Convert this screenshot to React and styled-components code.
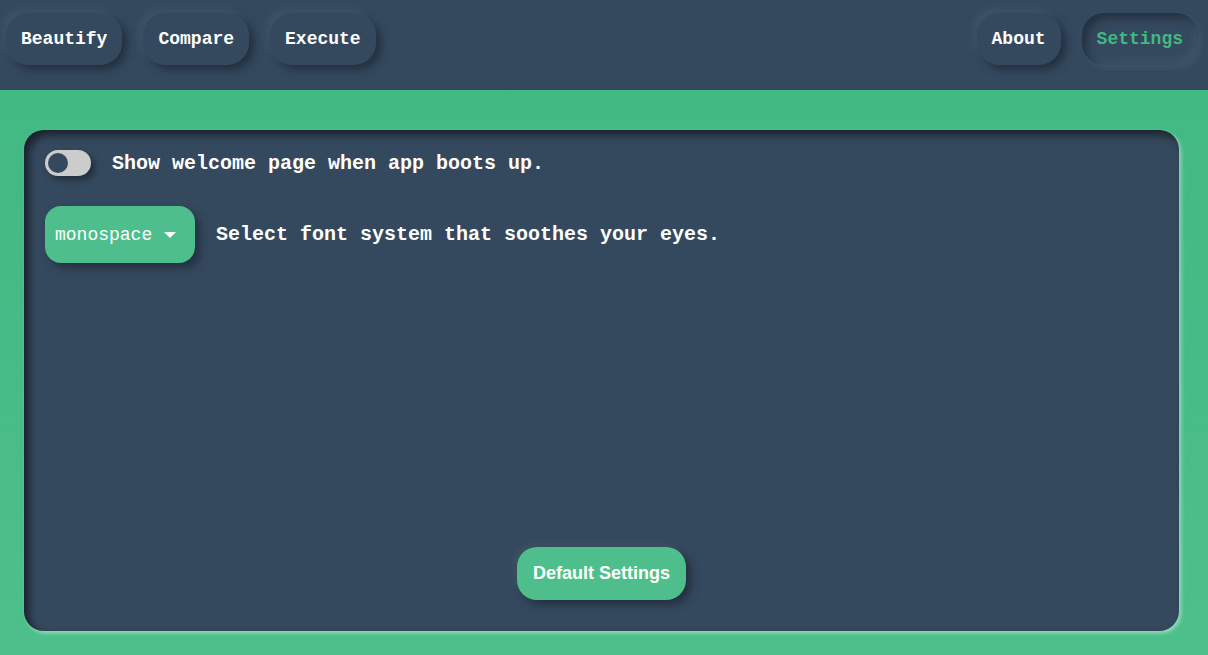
import { useState } from 'react';
import styled, { createGlobalStyle, css } from 'styled-components';

const GlobalStyle = createGlobalStyle`
    html, body {
        margin: 0;
        padding: 0;
        height: 100%;
        background: #35495e;
    }
    #root {
        height: 100%;
    }
`;

const navy = '#35495e';
const green = '#42b883';
const mono = `"Courier New", "Liberation Mono", monospace`;

const Page = styled.div`
    height: 655px;
    display: flex;
    flex-direction: column;
    font-family: ${mono};
`;

const Header = styled.header`
    height: 90px;
    flex-shrink: 0;
    background: ${navy};
    display: flex;
    align-items: flex-start;
    justify-content: space-between;
    padding: 13px 10px 0 6px;
    box-sizing: border-box;
`;

const NavGroup = styled.nav`
    display: flex;
    gap: 21px;
`;

const raised = css`
    box-shadow: 5px 5px 9px rgba(20, 30, 40, 0.55), -4px -4px 8px rgba(255, 255, 255, 0.06);
`;

const pressed = css`
    box-shadow: inset 5px 5px 9px rgba(20, 30, 40, 0.55), inset -4px -4px 8px rgba(255, 255, 255, 0.06),
        3px 3px 6px rgba(255, 255, 255, 0.05);
`;

const NavButton = styled.button`
    height: 52px;
    padding: 0 15px;
    border: none;
    border-radius: 22px;
    background: ${navy};
    color: ${props => props.$active ? green : '#ffffff'};
    font-family: ${mono};
    font-weight: 700;
    font-size: 18px;
    cursor: pointer;
    ${props => props.$active ? pressed : raised}
`;

const Main = styled.main`
    flex: 1;
    background: linear-gradient(180deg, #42b883 0%, #4dbf8b 100%);
    padding: 40px 29px 24px 24px;
    display: flex;
    box-sizing: border-box;
`;

const Panel = styled.section`
    flex: 1;
    background: ${navy};
    border-radius: 20px;
    padding: 20px 21px 31px;
    display: flex;
    flex-direction: column;
    box-sizing: border-box;
    box-shadow: inset 5px 5px 8px rgba(0, 0, 0, 0.55), 2px 2px 4px rgba(255, 255, 255, 0.45);
`;

const Row = styled.div`
    display: flex;
    align-items: center;
    gap: ${props => props.$gap || 21}px;
    margin-bottom: ${props => props.$spacing || 0}px;
`;

const Label = styled.span`
    color: #ffffff;
    font-weight: 700;
    font-size: 20px;
`;

const Toggle = styled.button`
    width: 46px;
    height: 26px;
    border: none;
    border-radius: 13px;
    background: #cccccc;
    padding: 3px;
    display: flex;
    justify-content: ${props => props.$on ? 'flex-end' : 'flex-start'};
    cursor: pointer;
    box-shadow: 4px 4px 6px rgba(20, 30, 40, 0.6);
`;

const Knob = styled.span`
    width: 20px;
    height: 20px;
    border-radius: 50%;
    background: ${props => props.$on ? green : navy};
`;

const Select = styled.button`
    width: 150px;
    height: 57px;
    border: none;
    border-radius: 16px;
    background: #4ebf8c;
    color: #ffffff;
    font-family: ${mono};
    font-size: 18px;
    display: flex;
    align-items: center;
    gap: 12px;
    padding: 0 10px;
    cursor: pointer;
    box-shadow: 5px 5px 9px rgba(20, 30, 40, 0.55);
`;

const Caret = styled.span`
    width: 0;
    height: 0;
    border-left: 6px solid transparent;
    border-right: 6px solid transparent;
    border-top: 6px solid #ffffff;
    margin-top: 1px;
`;

const Footer = styled.div`
    margin-top: auto;
    display: flex;
    justify-content: center;
`;

const DefaultButton = styled.button`
    height: 53px;
    padding: 0 16px;
    border: none;
    border-radius: 20px;
    background: #4ebf8c;
    color: #ffffff;
    font-family: "Liberation Sans", Arial, sans-serif;
    font-weight: 700;
    font-size: 18px;
    cursor: pointer;
    box-shadow: 5px 5px 9px rgba(20, 30, 40, 0.55), -3px -3px 6px rgba(255, 255, 255, 0.05);
`;

const leftNav = ['Beautify', 'Compare', 'Execute'];
const rightNav = ['About', 'Settings'];

const App = () => {
    const [active, setActive] = useState('Settings');
    const [welcome, setWelcome] = useState(false);

    return (
        <Page>
            <GlobalStyle />
            <Header>
                <NavGroup>
                    {leftNav.map(item => (
                        <NavButton key={item} $active={item === active} onClick={() => setActive(item)}>
                            {item}
                        </NavButton>
                    ))}
                </NavGroup>
                <NavGroup>
                    {rightNav.map(item => (
                        <NavButton key={item} $active={item === active} onClick={() => setActive(item)}>
                            {item}
                        </NavButton>
                    ))}
                </NavGroup>
            </Header>
            <Main>
                <Panel>
                    <Row $spacing={30}>
                        <Toggle $on={welcome} onClick={() => setWelcome(!welcome)}>
                            <Knob $on={welcome} />
                        </Toggle>
                        <Label>Show welcome page when app boots up.</Label>
                    </Row>
                    <Row>
                        <Select>
                            monospace
                            <Caret />
                        </Select>
                        <Label>Select font system that soothes your eyes.</Label>
                    </Row>
                    <Footer>
                        <DefaultButton>Default Settings</DefaultButton>
                    </Footer>
                </Panel>
            </Main>
        </Page>
    );
};

export default App;
